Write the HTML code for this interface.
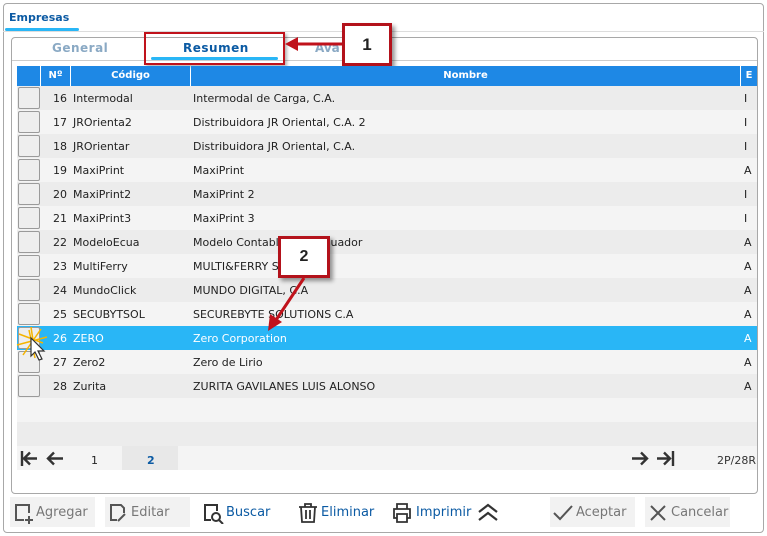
<!DOCTYPE html>
<html><head><meta charset="utf-8"><style>
*{box-sizing:border-box;margin:0;padding:0}
body{width:767px;height:536px;background:#fff;font-family:"DejaVu Sans","Liberation Sans",sans-serif;font-size:11px;color:#222;position:relative;overflow:hidden}
.abs{position:absolute}
#outer{left:3px;top:3px;width:761px;height:530px;border:1px solid #a8a8a8;border-radius:4px}
#inner{left:11px;top:37px;width:747px;height:457px;border:1px solid #a8a8a8;border-radius:4px}
.row{position:absolute;left:17px;width:740px;height:24px;line-height:26px;white-space:nowrap}
.row span{position:absolute;top:0}
.cb{position:absolute;left:1px;top:1px;width:22px;height:22px;border:1px solid #9a9a9a;border-radius:2px;background:#eee}
.n{left:23px;width:27px;text-align:right}
.c{left:56px}.d{left:176px}.e{left:727px}
.hd{position:absolute;top:66px;height:20px;background:#1e88e5;color:#fff;font-weight:bold;font-size:10px;line-height:20px;text-align:center}
.btn{position:absolute;top:497px;height:30px;line-height:31px;font-size:13px}
.gray{background:#f2f2f2;color:#777}
.blue{color:#0b5aa3}
</style></head><body>
<div id="outer" class="abs"></div>
<div class="abs" style="left:9px;top:11px;font-weight:bold;color:#0b5aa3;font-size:11px">Empresas</div>
<div class="abs" style="left:5px;top:28px;width:74px;height:3px;background:#29b6f6;border-radius:2px"></div>
<div class="abs" style="left:3px;top:31px;width:761px;height:1px;background:#ddd"></div>
<div id="inner" class="abs"></div>
<div class="abs" style="left:12px;top:60px;width:745px;height:1px;background:#ccc"></div>
<div class="abs" style="left:52px;top:41px;font-weight:bold;color:#8aa9c4;font-size:12px;letter-spacing:.5px">General</div>
<div class="abs" style="left:183px;top:41px;font-weight:bold;color:#0b5aa3;font-size:12px;letter-spacing:.5px">Resumen</div>
<div class="abs" style="left:151px;top:57px;width:127px;height:3px;background:#29b6f6;border-radius:2px"></div>
<div class="abs" style="left:315px;top:41px;font-weight:bold;color:#8aa9c4;font-size:12px">Ava</div>
<div class="abs" style="left:144px;top:32px;width:141px;height:33px;border:2px solid #c0121b;box-shadow:2px 2px 3px rgba(0,0,0,.3)"></div>
<svg class="abs" style="left:282px;top:36px" width="65" height="16"><path d="M64 8H14" stroke="#c0121b" stroke-width="3"/><path d="M3 8L16 1V15Z" fill="#c0121b"/></svg>
<div class="abs" style="left:342px;top:23px;width:50px;height:43px;border:3px solid #b3121b;background:#fff;box-shadow:3px 3px 4px rgba(0,0,0,.4);font:bold 17px 'Liberation Sans',sans-serif;text-align:center;line-height:37px">1</div>

<div class="hd" style="left:17px;width:23px"></div>
<div class="hd" style="left:41px;width:29px">Nº</div>
<div class="hd" style="left:71px;width:119px">Código</div>
<div class="hd" style="left:191px;width:549px">Nombre</div>
<div class="hd" style="left:741px;width:16px">E</div>

<div class="row" style="top:86px;background:#ececec"><div class="cb"></div><span class="n">16</span><span class="c">Intermodal</span><span class="d">Intermodal de Carga, C.A.</span><span class="e">I</span></div>
<div class="row" style="top:110px;background:#f4f4f4"><div class="cb"></div><span class="n">17</span><span class="c">JROrienta2</span><span class="d">Distribuidora JR Oriental, C.A. 2</span><span class="e">I</span></div>
<div class="row" style="top:134px;background:#ececec"><div class="cb"></div><span class="n">18</span><span class="c">JROrientar</span><span class="d">Distribuidora JR Oriental, C.A.</span><span class="e">I</span></div>
<div class="row" style="top:158px;background:#f4f4f4"><div class="cb"></div><span class="n">19</span><span class="c">MaxiPrint</span><span class="d">MaxiPrint</span><span class="e">A</span></div>
<div class="row" style="top:182px;background:#ececec"><div class="cb"></div><span class="n">20</span><span class="c">MaxiPrint2</span><span class="d">MaxiPrint 2</span><span class="e">I</span></div>
<div class="row" style="top:206px;background:#f4f4f4"><div class="cb"></div><span class="n">21</span><span class="c">MaxiPrint3</span><span class="d">MaxiPrint 3</span><span class="e">I</span></div>
<div class="row" style="top:230px;background:#ececec"><div class="cb"></div><span class="n">22</span><span class="c">ModeloEcua</span><span class="d">Modelo Contable para Ecuador</span><span class="e">A</span></div>
<div class="row" style="top:254px;background:#f4f4f4"><div class="cb"></div><span class="n">23</span><span class="c">MultiFerry</span><span class="d">MULTI&amp;FERRY SERVICES</span><span class="e">A</span></div>
<div class="row" style="top:278px;background:#ececec"><div class="cb"></div><span class="n">24</span><span class="c">MundoClick</span><span class="d">MUNDO DIGITAL, C.A</span><span class="e">A</span></div>
<div class="row" style="top:302px;background:#f4f4f4"><div class="cb"></div><span class="n">25</span><span class="c">SECUBYTSOL</span><span class="d">SECUREBYTE SOLUTIONS C.A</span><span class="e">A</span></div>
<div class="row" style="top:326px;background:#29b6f6;color:#fff"><div class="cb"></div><span class="n">26</span><span class="c">ZERO</span><span class="d">Zero Corporation</span><span class="e">A</span></div>
<div class="row" style="top:350px;background:#f4f4f4"><div class="cb"></div><span class="n">27</span><span class="c">Zero2</span><span class="d">Zero de Lirio</span><span class="e">A</span></div>
<div class="row" style="top:374px;background:#ececec"><div class="cb"></div><span class="n">28</span><span class="c">Zurita</span><span class="d">ZURITA GAVILANES LUIS ALONSO</span><span class="e">A</span></div>
<div class="row" style="top:398px;background:#f4f4f4"></div>
<div class="row" style="top:422px;background:#ececec"></div>
<div class="row" style="top:446px;background:#f4f4f4;height:24px"></div>
<div class="abs" style="left:122px;top:446px;width:56px;height:24px;background:#e8e8e8"></div>
<svg class="abs" style="left:19px;top:450px" width="46" height="17" fill="none" stroke="#333" stroke-width="2.4"><path d="M3 1V16M18 8.5H5M11 2.5L5 8.5L11 14.5"/><path d="M44 8.5H29M35 2.5L29 8.5L35 14.5"/></svg>
<div class="abs" style="left:91px;top:454px;font-size:11px">1</div>
<div class="abs" style="left:147px;top:454px;font-size:11px;font-weight:bold;color:#0b5aa3">2</div>
<svg class="abs" style="left:630px;top:450px" width="46" height="17" fill="none" stroke="#333" stroke-width="2.4"><path d="M2 8.5H17M11 2.5L17 8.5L11 14.5"/><path d="M27 8.5H40M34 2.5L40 8.5L34 14.5M43 1V16"/></svg>
<div class="abs" style="left:717px;top:454px;font-size:11px;color:#333">2P/28R</div>

<svg class="abs" style="left:15px;top:325px" width="36" height="38"><g stroke="#f5b400" stroke-width="1.5"><path d="M16 2L19 22M4 9L28 18M2 20L32 12M8 30L26 4M20 33L14 5"/></g><path d="M16 13V31L20 27L24 35L27 34L23 26H29Z" fill="#fff" stroke="#333" stroke-width="1.2"/></svg>

<div class="abs" style="left:278px;top:236px;width:52px;height:42px;border:3px solid #b3121b;background:#fff;box-shadow:3px 3px 4px rgba(0,0,0,.4);font:bold 16px 'Liberation Sans',sans-serif;text-align:center;line-height:36px">2</div>
<svg class="abs" style="left:262px;top:276px" width="50" height="58"><path d="M42 2L14 44" stroke="#c0121b" stroke-width="3"/><path d="M6 55L8 38L20 46Z" fill="#c0121b"/></svg>

<div class="btn gray" style="left:10px;width:85px"><svg class="abs" style="left:3px;top:5px" width="20" height="22" fill="none" stroke="#555" stroke-width="2"><path d="M11 18H3V3H16V11"/><path d="M16 14V22M12 18H20"/></svg><span style="position:absolute;left:26px">Agregar</span></div>
<div class="btn gray" style="left:105px;width:85px"><svg class="abs" style="left:3px;top:5px" width="20" height="22" fill="none" stroke="#555" stroke-width="2"><path d="M9 18H3V3H13L16 6V11M10 19L17 12"/></svg><span style="position:absolute;left:26px">Editar</span></div>
<div class="btn blue" style="left:200px;width:75px"><svg class="abs" style="left:2px;top:5px" width="22" height="22" fill="none" stroke="#333" stroke-width="2"><path d="M9 18H3V3H15V9"/><circle cx="14" cy="15" r="4"/><path d="M17 18L21 22"/></svg><span style="position:absolute;left:26px">Buscar</span></div>
<div class="btn blue" style="left:296px;width:80px"><svg class="abs" style="left:2px;top:6px" width="20" height="20" fill="none" stroke="#333" stroke-width="1.8"><path d="M1 4H19M7 4V1H13V4M3 4L4 19H16L17 4M8 7V16M12 7V16"/></svg><span style="position:absolute;left:25px">Eliminar</span></div>
<div class="btn blue" style="left:390px;width:80px"><svg class="abs" style="left:2px;top:6px" width="20" height="20" fill="none" stroke="#333" stroke-width="1.8"><path d="M5 6V1H15V6M5 15H2V6H18V15H15M5 11H15V19H5Z"/></svg><span style="position:absolute;left:26px">Imprimir</span></div>
<svg class="abs" style="left:477px;top:502px" width="22" height="20" fill="none" stroke="#333" stroke-width="2.2"><path d="M2 10L11 3L20 10M2 18L11 11L20 18"/></svg>
<div class="btn gray" style="left:550px;width:85px;top:497px"><svg class="abs" style="left:3px;top:7px" width="20" height="18" fill="none" stroke="#555" stroke-width="2"><path d="M1 9L7 15L19 2"/></svg><span style="position:absolute;left:26px">Aceptar</span></div>
<div class="btn gray" style="left:645px;width:85px;top:497px"><svg class="abs" style="left:4px;top:7px" width="18" height="18" fill="none" stroke="#555" stroke-width="2"><path d="M2 2L16 16M16 2L2 16"/></svg><span style="position:absolute;left:26px">Cancelar</span></div>
</body></html>
